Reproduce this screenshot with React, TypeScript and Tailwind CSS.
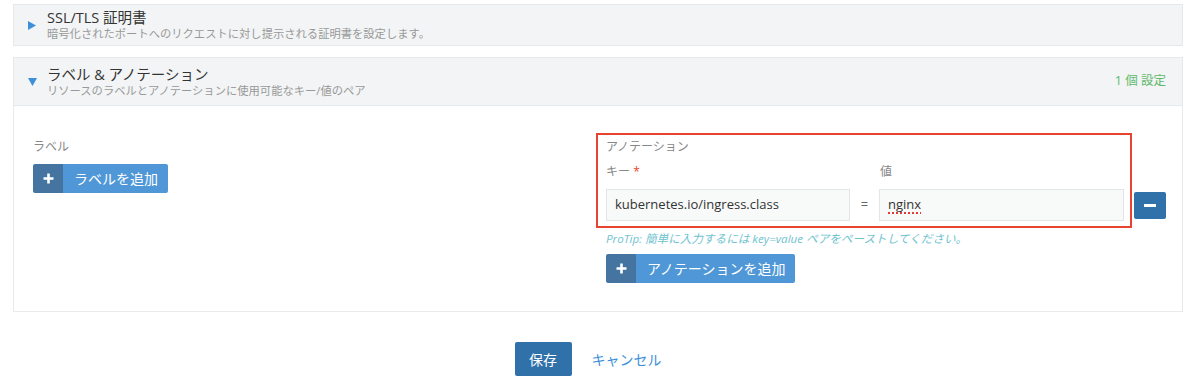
const font = { fontFamily: '"Open Sans", "Noto Sans CJK JP", sans-serif' };

const PanelHeader = ({
  open,
  title,
  subtitle,
  right,
}: {
  open: boolean;
  title: string;
  subtitle: string;
  right?: string;
}) => (
  <div className="flex items-center bg-[#f2f4f5] border border-[#e6e9eb] pl-[14px] pr-[16px]">
    <div className="w-[19px] flex items-center">
      {open ? (
        <svg width="9" height="8" viewBox="0 0 9 8">
          <path d="M0 0 L9 0 L4.5 8 Z" fill="#3d8fd8" />
        </svg>
      ) : (
        <svg width="8" height="9" viewBox="0 0 8 9">
          <path d="M0 0 L8 4.5 L0 9 Z" fill="#3d8fd8" />
        </svg>
      )}
    </div>
    <div className="flex-1">
      <div className="text-[14.5px] leading-[18px] text-[#333]">{title}</div>
      <div className="text-[11.3px] leading-[14px] text-[#999]">{subtitle}</div>
    </div>
    {right && <div className="text-[12.5px] text-[#5fb96a]">{right}</div>}
  </div>
);

const AddButton = ({ label }: { label: string }) => (
  <button className="flex h-[29px] items-stretch rounded-[2px] overflow-hidden text-white text-[14px]">
    <span className="w-[30px] bg-[#44749f] flex items-center justify-center">
      <svg width="11" height="11" viewBox="0 0 11 11">
        <path d="M5.5 0.5 V10.5 M0.5 5.5 H10.5" stroke="#fff" strokeWidth="2.6" />
      </svg>
    </span>
    <span className="bg-[#4f97d6] flex items-center pl-[11px] pr-[10px]">{label}</span>
  </button>
);

export default function App() {
  return (
    <div className="w-[1200px] h-[383px] bg-white overflow-hidden" style={font}>
      <div className="px-[13px] pt-[4px] w-[1196px]">
        <div className="h-[42px] [&>div]:h-full">
          <PanelHeader
            open={false}
            title="SSL/TLS 証明書"
            subtitle="暗号化されたポートへのリクエストに対し提示される証明書を設定します。"
          />
        </div>
        <div className="mt-[11px] h-[49px] [&>div]:h-full">
          <PanelHeader
            open
            title="ラベル & アノテーション"
            subtitle="リソースのラベルとアノテーションに使用可能なキー/値のペア"
            right="1 個 設定"
          />
        </div>
        <div className="h-[206px] border border-t-0 border-[#e8ebed] flex pl-[19px] pt-[33px]">
          <div className="w-[563px]">
            <div className="text-[12px] leading-[16px] text-[#888]">ラベル</div>
            <div className="mt-[9px]">
              <AddButton label="ラベルを追加" />
            </div>
          </div>
          <div className="relative pl-[10px]">
            <div className="absolute left-0 top-[-6px] w-[536px] h-[95px] border-2 border-[#e8432e] pointer-events-none" />
            <div className="text-[12px] leading-[16px] text-[#888]">アノテーション</div>
            <div className="flex mt-[9px] text-[12px] leading-[16px] text-[#888]">
              <div className="w-[274px]">
                キー <span className="text-[#e8432e]">*</span>
              </div>
              <div>値</div>
            </div>
            <div className="flex items-center mt-[9px]">
              <div className="w-[244px] h-[32px] border border-[#e3e6e8] bg-[#f8f9f9] flex items-center px-[8px] text-[13px] text-[#333]">
                kubernetes.io/ingress.class
              </div>
              <div className="w-[29px] text-center text-[13px] text-[#666]">=</div>
              <div className="w-[245px] h-[32px] border border-[#e3e6e8] bg-[#f8f9f9] flex items-center px-[8px] text-[13px] text-[#333]">
                <span className="underline decoration-dotted decoration-[#e53935] decoration-2 underline-offset-[3px]">
                  nginx
                </span>
              </div>
              <button className="ml-[10px] w-[32px] h-[27px] rounded-[2px] bg-[#3071a9] flex items-center justify-center">
                <span className="w-[12px] h-[3px] bg-white" />
              </button>
            </div>
            <div className="mt-[11px] text-[11.6px] leading-[14px] italic text-[#6fc3cf]">
              ProTip: 簡単に入力するには key=value ペアをペーストしてください。
            </div>
            <div className="mt-[8px]">
              <AddButton label="アノテーションを追加" />
            </div>
          </div>
        </div>
      </div>
      <div className="flex justify-center mt-[30px] pr-[4px]">
        <button className="w-[57px] h-[34px] rounded-[2px] bg-[#3071a9] text-white text-[14px]">保存</button>
        <button className="px-[20px] h-[34px] text-[#3d8fd8] text-[14px]">キャンセル</button>
      </div>
    </div>
  );
}
